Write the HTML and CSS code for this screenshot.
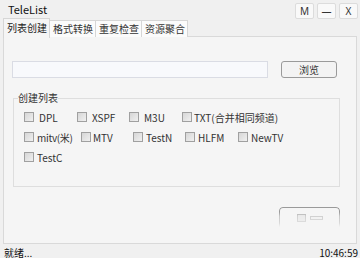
FILE: index.html
```html
<!DOCTYPE html>
<html lang="zh-CN">
<head>
    <meta charset="UTF-8">
    <meta name="viewport" content="width=device-width, initial-scale=1.0">
    <title>TeleList</title>
    <link rel="stylesheet" href="styles.css">
</head>
<body>

    <div class="window">
        <div class="titlebar">
            <span class="title">TeleList</span>
            <div class="winbtns">
                <button class="winbtn">M</button>
                <button class="winbtn">—</button>
                <button class="winbtn">X</button>
            </div>
        </div>

        <div class="tabs">
            <div class="tab active">列表创建</div>
            <div class="tab">格式转换</div>
            <div class="tab">重复检查</div>
            <div class="tab">资源聚合</div>
        </div>

        <div class="panel">
            <div class="pathrow">
                <input type="text" class="path">
                <button class="browse">浏览</button>
            </div>

            <fieldset class="group">
                <legend>创建列表</legend>
                <div class="row">
                    <label class="opt w53"><span class="cb"></span><span class="gap5">DPL</span></label>
                    <label class="opt w52"><span class="cb"></span><span class="gap5">XSPF</span></label>
                    <label class="opt w53"><span class="cb"></span><span class="gap5">M3U</span></label>
                    <label class="opt"><span class="cb"></span><span class="gap2">TXT(合并相同频道)</span></label>
                </div>
                <div class="row">
                    <label class="opt w57"><span class="cb"></span><span class="tight">mitv(米)</span></label>
                    <label class="opt w52"><span class="cb"></span><span class="gap2">MTV</span></label>
                    <label class="opt w52"><span class="cb"></span><span>TestN</span></label>
                    <label class="opt w53"><span class="cb"></span><span>HLFM</span></label>
                    <label class="opt"><span class="cb"></span><span>NewTV</span></label>
                </div>
                <div class="row">
                    <label class="opt"><span class="cb"></span><span>TestC</span></label>
                </div>
            </fieldset>

            <div class="actions">
                <div class="runbtn">
                    <span class="mini-cb"></span>
                    <span class="mini-bar"></span>
                </div>
            </div>
        </div>

        <div class="statusbar">
            <span>就绪...</span>
            <span>10:46:59</span>
        </div>
    </div>

</body>
</html>
```

FILE: styles.css
```css
body {
    margin: 0;
    background-color: #f0f0f0;
    font-family: "Noto Sans CJK SC", "Noto Sans", sans-serif;
    font-size: 10px;
    color: #333;
}
.window {
    width: 360px;
    height: 258px;
    overflow: hidden;
    display: flex;
    flex-direction: column;
}
.window > * {
    flex-shrink: 0;
}
.titlebar {
    display: flex;
    justify-content: space-between;
    align-items: flex-start;
    height: 15px;
    padding: 3px 2px 0 8px;
}
.title {
    font-size: 11px;
    line-height: 13px;
    color: #111;
}
.winbtns {
    display: flex;
    gap: 3px;
}
.winbtn {
    width: 19px;
    height: 16px;
    padding: 0;
    border: 1px solid #dcdcdc;
    border-radius: 2px;
    background: #f9f9f9;
    font-family: "Noto Sans", sans-serif;
    font-size: 10px;
    color: #333;
    line-height: 14px;
}
.tabs {
    display: flex;
    margin-left: 3px;
    height: 18px;
    position: relative;
    z-index: 1;
}
.tab {
    padding: 0 2px 0 3px;
    width: 40px;
    height: 16px;
    margin-top: 2px;
    line-height: 16px;
    white-space: nowrap;
    border: 1px solid #d6d6d6;
    border-bottom: none;
    border-left: none;
    background: #fbfbfb;
    color: #333;
}
.tab.active {
    margin-top: 0;
    height: 19px;
    line-height: 17px;
    border-left: 1px solid #d6d6d6;
    background: #f5f5f5;
    color: #222;
}
.panel {
    margin: 0 3px;
    height: 206px;
    border: 1px solid #d9d9d9;
    background: #f5f5f5;
    padding: 0 8px;
    display: flex;
    flex-direction: column;
}
.pathrow {
    display: flex;
    align-items: center;
    margin-top: 24px;
}
.path {
    width: 256px;
    height: 17px;
    box-sizing: border-box;
    border: 1px solid #dadce4;
    background: #f8f9fc;
    margin: 0;
    padding: 0 3px;
}
.browse {
    margin-left: 13px;
    width: 56px;
    height: 17px;
    padding: 0;
    border: 1px solid #9a9a9a;
    border-radius: 3px;
    background: #f3f3f3;
    font-family: inherit;
    font-size: 10px;
    color: #333;
    line-height: 15px;
}
.group {
    margin: 14px 0 0 1px;
    width: 327px;
    height: 95px;
    box-sizing: border-box;
    border: 1px solid #dedede;
    padding: 3px 0 0 10px;
}
.group legend {
    padding: 0;
    margin-left: -6px;
    line-height: 12px;
    color: #333;
}
.row {
    display: flex;
    height: 20px;
    align-items: center;
}
.opt {
    display: flex;
    align-items: center;
    gap: 3px;
    color: #333;
}
.w52 { width: 52px; }
.w53 { width: 53px; }
.w57 { width: 57px; }
.gap5 { margin-left: 2px; }
.gap2 { margin-left: -1px; }
.tight { letter-spacing: -0.3px; }
.cb {
    width: 8px;
    height: 8px;
    border: 1px solid #a0a0a0;
    background: linear-gradient(135deg, #d6d6d6, #f0f0f0);
}
.actions {
    display: flex;
    justify-content: flex-end;
    margin-top: 20px;
    padding-right: 8px;
}
.runbtn {
    width: 61px;
    height: 20px;
    box-sizing: border-box;
    border: 1px solid #9a9a9a;
    border-bottom: none;
    border-radius: 4px 4px 0 0;
    display: flex;
    align-items: flex-start;
    justify-content: center;
    gap: 4px;
    padding-top: 6px;
    -webkit-mask-image: linear-gradient(#000 25%, rgba(0,0,0,0.5) 45%, rgba(0,0,0,0.3) 80%, transparent);
}
.mini-cb {
    width: 7px;
    height: 6px;
    border: 1px solid #aaa;
    background: #e0e0e0;
}
.mini-bar {
    width: 11px;
    height: 2px;
    margin-top: 2px;
    border: 1px solid #aaa;
    background: #eee;
}
.statusbar {
    display: flex;
    justify-content: space-between;
    padding: 0 2px 0 4px;
    margin-top: 2px;
    line-height: 13px;
    color: #111;
}
```
